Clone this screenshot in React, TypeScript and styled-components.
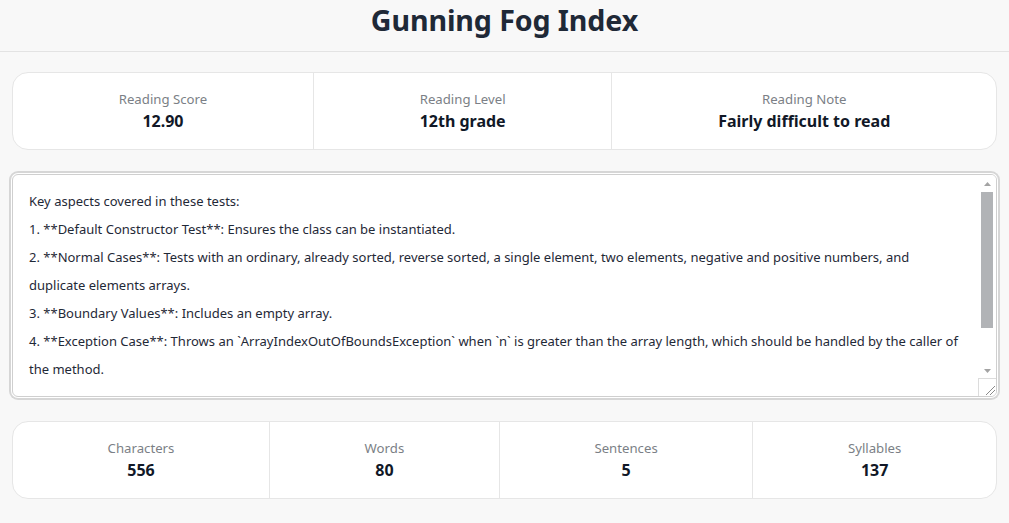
import React, { useLayoutEffect, useRef, useState } from "react";
import styled, { createGlobalStyle } from "styled-components";

const GlobalStyle = createGlobalStyle`
  * {
    box-sizing: border-box;
  }

  body {
    margin: 0;
    background: #f8f8f8;
    font-family: "Noto Sans", "Open Sans", sans-serif;
    color: #1f2937;
  }
`;

const Header = styled.header`
  height: 52px;
  display: flex;
  align-items: center;
  justify-content: center;
  border-bottom: 1px solid #e3e3e3;
`;

const Title = styled.h1`
  margin: 0 0 12px;
  font-size: 28.6px;
  font-weight: 700;
  color: #1f2937;
  letter-spacing: -0.1px;
`;

const Main = styled.main`
  display: flex;
  flex-direction: column;
  gap: 24px;
  padding: 20px 12px 24px;
`;

const StatsCard = styled.section`
  display: flex;
  background: #ffffff;
  border: 1px solid #e6e6e6;
  border-radius: 16px;
  overflow: hidden;
`;

const StatCell = styled.div`
  flex: 1 1 auto;
  display: flex;
  flex-direction: column;
  align-items: center;
  padding: 16px 12px;
  border-left: 1px solid #e6e6e6;

  &:first-child {
    border-left: none;
  }
`;

const StatLabel = styled.span`
  font-size: 13.2px;
  line-height: 20px;
  color: #7b7f86;
  white-space: nowrap;
`;

const StatValue = styled.span`
  font-size: 16px;
  line-height: 24px;
  font-weight: 700;
  color: #111827;
  white-space: nowrap;
`;

const EditorFrame = styled.div`
  position: relative;
  height: 223px;
  border: 1px solid #cfcfcf;
  border-radius: 6px;
  box-shadow: 0 0 0 1px #ffffff, 0 0 0 3px #d6d6d6;
  background: #ffffff;
  overflow: hidden;
`;

const TextArea = styled.textarea`
  display: block;
  width: 100%;
  height: 100%;
  padding: 12px 33px 13px 16px;
  border: none;
  background: transparent;
  font-family: "Noto Sans", "Open Sans", sans-serif;
  font-size: 13px;
  line-height: 28px;
  color: #1f2937;
  resize: none;
  outline: none;
  scrollbar-width: none;

  &::-webkit-scrollbar {
    display: none;
  }
`;

const ScrollTrack = styled.div`
  position: absolute;
  top: 0;
  right: 0;
  bottom: 17px;
  width: 17px;
  display: flex;
  flex-direction: column;
  background: #ffffff;
`;

const ArrowButton = styled.div`
  height: 17px;
  flex: none;
  display: flex;
  align-items: center;
  justify-content: center;
  color: #a3a3a3;
`;

const ThumbArea = styled.div`
  position: relative;
  flex: 1;
`;

const Thumb = styled.div`
  position: absolute;
  left: 2px;
  right: 3px;
  background: #b1b3b6;
`;

const Corner = styled.div`
  position: absolute;
  right: 0;
  bottom: 0;
  width: 18px;
  height: 18px;
  background: #ffffff;
  border-left: 1px solid #dcdcdc;
  border-top: 1px solid #dcdcdc;
  display: flex;
  align-items: flex-end;
  justify-content: flex-end;
`;

const initialText = `Key aspects covered in these tests:
1. **Default Constructor Test**: Ensures the class can be instantiated.
2. **Normal Cases**: Tests with an ordinary, already sorted, reverse sorted, a single element, two elements, negative and positive numbers, and duplicate elements arrays.
3. **Boundary Values**: Includes an empty array.
4. **Exception Case**: Throws an \`ArrayIndexOutOfBoundsException\` when \`n\` is greater than the array length, which should be handled by the caller of the method.

These tests ensure comprehensive coverage of the functionality.`;

const readingStats = [
  { label: "Reading Score", value: "12.90" },
  { label: "Reading Level", value: "12th grade" },
  { label: "Reading Note", value: "Fairly difficult to read" },
];

const textStats = [
  { label: "Characters", value: "556" },
  { label: "Words", value: "80" },
  { label: "Sentences", value: "5" },
  { label: "Syllables", value: "137" },
];

const Stats: React.FC<{ items: { label: string; value: string }[] }> = ({
  items,
}) => (
  <StatsCard>
    {items.map((item) => (
      <StatCell key={item.label}>
        <StatLabel>{item.label}</StatLabel>
        <StatValue>{item.value}</StatValue>
      </StatCell>
    ))}
  </StatsCard>
);

const Editor: React.FC = () => {
  const [text, setText] = useState(initialText);
  const areaRef = useRef<HTMLTextAreaElement>(null);
  const trackRef = useRef<HTMLDivElement>(null);
  const [thumb, setThumb] = useState({ top: 0, height: 0 });

  const measure = () => {
    const area = areaRef.current;
    const track = trackRef.current;
    if (!area || !track) return;
    const len = track.clientHeight;
    const ratio = area.clientHeight / area.scrollHeight;
    setThumb({
      top: (area.scrollTop / area.scrollHeight) * len,
      height: Math.min(1, ratio) * len,
    });
  };

  useLayoutEffect(measure, [text]);

  return (
    <EditorFrame>
      <TextArea
        ref={areaRef}
        value={text}
        onChange={(e) => setText(e.target.value)}
        onScroll={measure}
        spellCheck={false}
      />
      <ScrollTrack>
        <ArrowButton>
          <svg width="7" height="4" viewBox="0 0 7 4">
            <polygon points="3.5,0 7,4 0,4" fill="currentColor" />
          </svg>
        </ArrowButton>
        <ThumbArea ref={trackRef}>
          <Thumb style={{ top: thumb.top, height: thumb.height }} />
        </ThumbArea>
        <ArrowButton>
          <svg width="7" height="4" viewBox="0 0 7 4">
            <polygon points="0,0 7,0 3.5,4" fill="currentColor" />
          </svg>
        </ArrowButton>
      </ScrollTrack>
      <Corner>
        <svg width="12" height="12" viewBox="0 0 12 12">
          <line x1="2" y1="11" x2="11" y2="2" stroke="#8a8a8a" strokeWidth="1" />
          <line x1="6" y1="11" x2="11" y2="6" stroke="#8a8a8a" strokeWidth="1" />
        </svg>
      </Corner>
    </EditorFrame>
  );
};

const App: React.FC = () => (
  <>
    <GlobalStyle />
    <Header>
      <Title>Gunning Fog Index</Title>
    </Header>
    <Main>
      <Stats items={readingStats} />
      <Editor />
      <Stats items={textStats} />
    </Main>
  </>
);

export default App;
